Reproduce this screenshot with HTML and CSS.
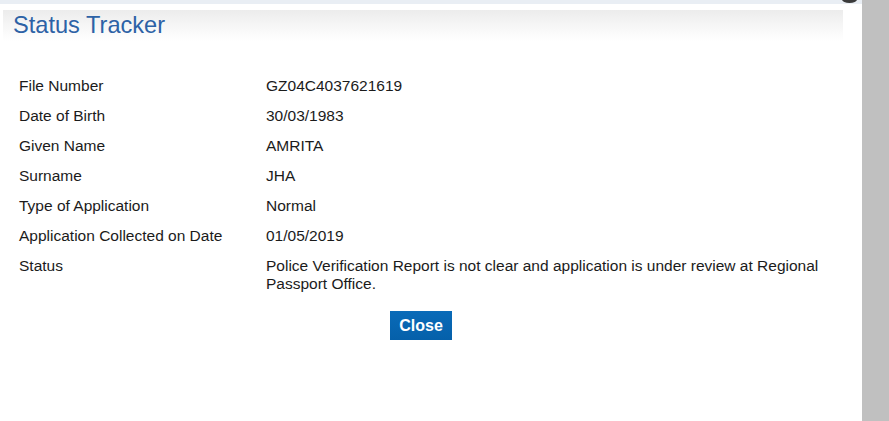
FILE: index.html
```html
<!DOCTYPE html>
<html>
<head>
<meta charset="utf-8">
<link rel="stylesheet" href="styles.css">
</head>
<body>
<div class="page">
  <div class="main">
    <div class="topstrip"><span class="closeknob"></span></div>
    <div class="dialog">
      <div class="titlebar"><h1 class="title">Status Tracker</h1></div>
      <div class="details">
        <div class="row"><div class="label">File Number</div><div class="value">GZ04C4037621619</div></div>
        <div class="row"><div class="label">Date of Birth</div><div class="value">30/03/1983</div></div>
        <div class="row"><div class="label">Given Name</div><div class="value">AMRITA</div></div>
        <div class="row"><div class="label">Surname</div><div class="value">JHA</div></div>
        <div class="row"><div class="label">Type of Application</div><div class="value">Normal</div></div>
        <div class="row"><div class="label">Application Collected on Date</div><div class="value">01/05/2019</div></div>
        <div class="row"><div class="label">Status</div><div class="value">Police Verification Report is not clear and application is under review at Regional Passport Office.</div></div>
      </div>
      <div class="actions"><button class="close-btn">Close</button></div>
    </div>
  </div>
  <div class="scrollbar"></div>
</div>
</body>
</html>
```
FILE: styles.css
```css
html, body {
  margin: 0;
  padding: 0;
  background: #ffffff;
  height: 100%;
}
body {
  font-family: "Liberation Sans", Arial, sans-serif;
  color: #1b1b1b;
}
.page {
  display: flex;
  height: 421px;
  overflow: hidden;
}
.main {
  flex: 1;
  min-width: 0;
  position: relative;
}
.scrollbar {
  width: 27px;
  background: #c0c0c0;
}
.topstrip {
  height: 4px;
  background: #e9eef4;
  position: relative;
}
.closeknob {
  position: absolute;
  left: 842px;
  top: -4px;
  width: 15px;
  height: 7px;
  border-radius: 50%;
  background: #3a3a3a;
}
.dialog {
  padding: 6px 19px 0 3px;
}
.titlebar {
  height: 31px;
  background: linear-gradient(to bottom, #ececec 0%, #f6f6f6 50%, #ffffff 100%);
  padding-left: 10px;
}
.title {
  margin: 0;
  font-weight: normal;
  font-size: 23.6px;
  line-height: 31px;
  color: #2d62a6;
}
.details {
  padding: 30px 0 0 16px;
}
.row {
  display: grid;
  grid-template-columns: 247px 1fr;
  padding: 6px 0;
  font-size: 15.5px;
  line-height: 18px;
}
.value {
  padding-right: 10px;
}
.actions {
  display: flex;
  padding: 12px 0 0 387px;
}
.close-btn {
  width: 62px;
  height: 29px;
  border: none;
  padding: 0;
  background: linear-gradient(to bottom, #0a6bb8, #0560aa);
  color: #ffffff;
  font-family: "Liberation Sans", Arial, sans-serif;
  font-weight: bold;
  font-size: 16px;
}
```
